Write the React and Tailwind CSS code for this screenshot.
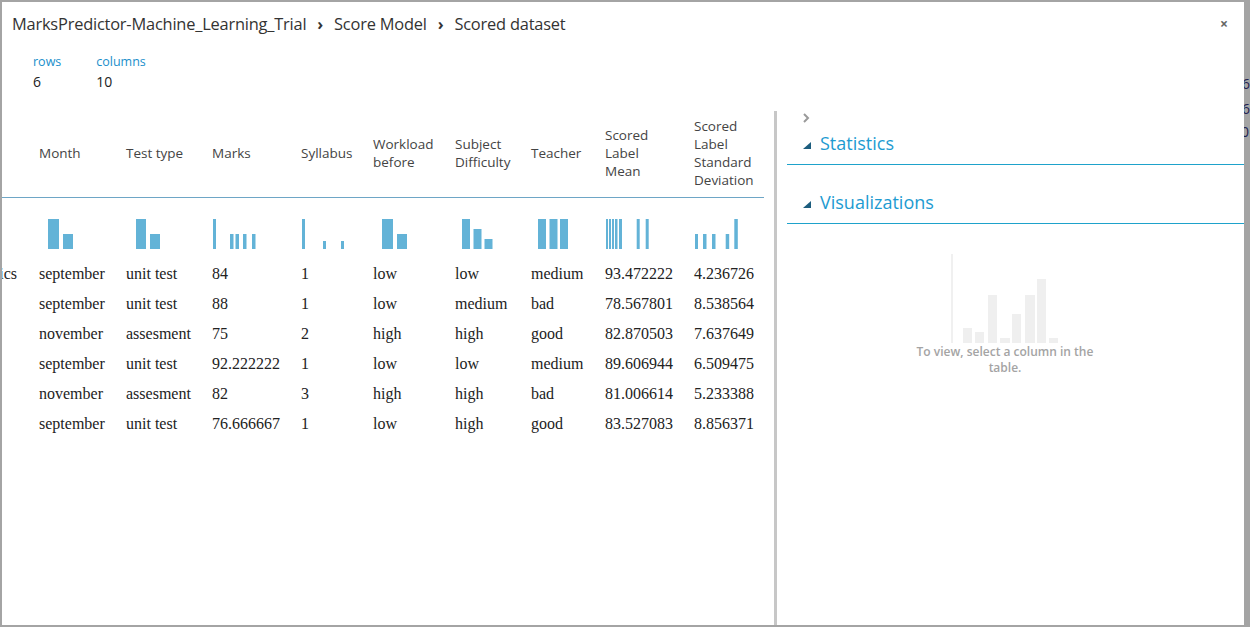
import React from "react";

const grid =
  "grid grid-cols-[37px_87px_86px_89px_72px_82px_76px_74px_89px_70px]";

const columns = [
  { head: [""], bars: [] },
  { head: ["Month"], bars: [[9, 11, 30], [24, 10, 15]] },
  { head: ["Test type"], bars: [[10, 10, 30], [24, 10, 15]] },
  {
    head: ["Marks"],
    bars: [[1, 3, 30], [18, 3.5, 15], [23.5, 3.5, 15], [31, 3.5, 15], [40, 3.5, 15]],
  },
  { head: ["Syllabus"], bars: [[1, 3, 30], [22, 3, 8], [40, 3, 8]] },
  { head: ["Workload", "before"], bars: [[9, 11, 30], [24, 10, 15]] },
  { head: ["Subject", "Difficulty"], bars: [[7, 8, 30], [18.5, 8, 20], [29.5, 8, 10]] },
  { head: ["Teacher"], bars: [[7, 8, 30], [18.5, 8, 30], [29, 8, 30]] },
  {
    head: ["Scored", "Label", "Mean"],
    bars: [
      [1, 2, 30], [4, 2, 30], [7, 2, 30], [10, 2.5, 30], [14, 3, 30],
      [31.7, 3, 30], [40.7, 3, 30],
    ],
  },
  {
    head: ["Scored", "Label", "Standard", "Deviation"],
    bars: [[1, 3, 15], [9, 3.5, 15], [18, 3.5, 15], [31.7, 3.5, 15], [40.3, 3.5, 30]],
  },
];

const rows = [
  ["Economics", "september", "unit test", "84", "1", "low", "low", "medium", "93.472222", "4.236726"],
  ["", "september", "unit test", "88", "1", "low", "medium", "bad", "78.567801", "8.538564"],
  ["", "november", "assesment", "75", "2", "high", "high", "good", "82.870503", "7.637649"],
  ["", "september", "unit test", "92.222222", "1", "low", "low", "medium", "89.606944", "6.509475"],
  ["", "november", "assesment", "82", "3", "high", "high", "bad", "81.006614", "5.233388"],
  ["", "september", "unit test", "76.666667", "1", "low", "high", "good", "83.527083", "8.856371"],
];

const placeholderBars = [
  [12, 9, 15], [24, 9, 11], [37, 9, 48], [49, 10, 5],
  [61, 9, 29], [74, 10, 48], [86, 9, 64], [98, 9, 5],
];

const Histogram = ({ bars }) => (
  <svg width="60" height="30" className="block">
    {bars.map(([x, w, h], i) => (
      <rect key={i} x={x} y={30 - h} width={w} height={h} fill="#63b3d7" />
    ))}
  </svg>
);

const SectionHeader = ({ title }) => (
  <div className="flex items-center h-[28px] pl-[16px]">
    <svg width="8" height="8" className="mr-[9px] mt-[5px]">
      <polygon points="8,0 8,7 0,7" fill="#1c5d7e" />
    </svg>
    <span className="text-[18px] text-[#1d9bd1]">{title}</span>
  </div>
);

export default function App() {
  return (
    <div
      className="w-[1250px] h-[627px] bg-[#a4a4a4] flex pl-[2px] pt-[2px] pb-[2px] overflow-hidden"
      style={{ fontFamily: "'Open Sans', 'Noto Sans', sans-serif" }}
    >
      <div className="w-[1242px] bg-white flex flex-col">
        {/* title bar */}
        <div className="flex justify-between items-center h-[28px] mt-[8px] pl-[10px] pr-[16px]">
          <div className="flex items-center text-[16.4px] text-[#333] tracking-[-0.2px]">
            <span>MarksPredictor-Machine_Learning_Trial</span>
            <span className="ml-[11px] mr-[11px] font-bold text-[16px]">›</span>
            <span>Score Model</span>
            <span className="ml-[11px] mr-[11px] font-bold text-[16px]">›</span>
            <span>Scored dataset</span>
          </div>
          <span className="text-[14px] font-bold text-[#666] leading-none">×</span>
        </div>

        {/* counts */}
        <div className="flex gap-[35px] pl-[31px] mt-[15px]">
          <div className="flex flex-col">
            <span className="text-[12.5px] leading-[18px] text-[#1a8fcb]">rows</span>
            <span className="text-[14px] leading-[20px] text-[#222] mt-[1px]">6</span>
          </div>
          <div className="flex flex-col">
            <span className="text-[12.5px] leading-[18px] text-[#1a8fcb]">columns</span>
            <span className="text-[14px] leading-[20px] text-[#222] mt-[1px]">10</span>
          </div>
        </div>

        {/* panes */}
        <div className="flex flex-1 mt-[19px] min-h-0">
          <div className="w-[772px] overflow-hidden">
            <div className="w-[762px]">
              <div className={`${grid} h-[87px] pb-[3px] border-b border-[#6ea6c6]`}>
                {columns.map((c, i) => (
                  <div
                    key={i}
                    className="flex flex-col justify-center text-[13.5px] leading-[18px] text-[#444]"
                  >
                    {c.head.map((l, j) => (
                      <span key={j}>{l}</span>
                    ))}
                  </div>
                ))}
              </div>
              <div className={`${grid} h-[61px] pt-[21px]`}>
                {columns.map((c, i) => (
                  <div key={i}>
                    <Histogram bars={c.bars} />
                  </div>
                ))}
              </div>
              {rows.map((r, ri) => (
                <div
                  key={ri}
                  className={`${grid} h-[30px] items-center text-[16px] text-[#222]`}
                  style={{ fontFamily: "'Liberation Serif', serif" }}
                >
                  {r.map((v, ci) =>
                    ci === 0 ? (
                      <div key={ci} className="flex justify-end overflow-hidden pr-[22px] whitespace-nowrap">
                        {v}
                      </div>
                    ) : (
                      <div key={ci} className="whitespace-nowrap">
                        {v}
                      </div>
                    )
                  )}
                </div>
              ))}
            </div>
          </div>

          <div className="w-[3px] bg-[#c7c7c7]" />

          <div className="flex-1 flex flex-col pl-[10px]">
            <div className="h-[14px] pl-[16px] flex items-center">
              <svg width="7" height="10" className="block">
                <polyline points="1,1 5,5 1,9" fill="none" stroke="#9a9a9a" strokeWidth="2" />
              </svg>
            </div>
            <div className="mt-[4px] pb-[7px] border-b border-[#1ea2cb]">
              <SectionHeader title="Statistics" />
            </div>
            <div className="mt-[23px] pb-[7px] border-b border-[#1ea2cb]">
              <SectionHeader title="Visualizations" />
            </div>
            <div className="ml-[118px] mt-[30px] w-[200px] flex flex-col items-center">
              <svg width="108" height="89" className="block">
                <rect x="0" y="0" width="2" height="89" fill="#f0f0f0" />
                {placeholderBars.map(([x, w, h], i) => (
                  <rect key={i} x={x} y={89 - h} width={w} height={h} fill="#efefef" />
                ))}
              </svg>
              <p className="mt-[1px] text-[12px] leading-[16px] font-semibold text-[#a4a4a4] text-center">
                To view, select a column in the
                <br />
                table.
              </p>
            </div>
          </div>
        </div>
      </div>

      <div className="w-[6px] overflow-hidden relative">
        <div className="absolute left-[-2px] top-[72px] text-[14px] leading-[20px] text-[#1f2250]">6</div>
        <div className="absolute left-[-2px] top-[97px] text-[14px] leading-[20px] text-[#1f2250]">6</div>
        <div className="absolute left-[-3px] top-[120px] text-[14px] leading-[20px] text-[#1f2250]">0</div>
      </div>
    </div>
  );
}
